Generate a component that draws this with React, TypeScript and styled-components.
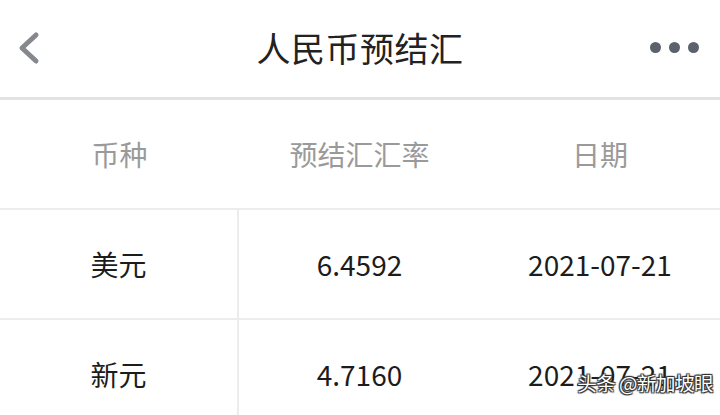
import React from "react";
import styled, { createGlobalStyle } from "styled-components";

const Global = createGlobalStyle`
  html, body { margin: 0; padding: 0; background: #fff; }
  body { font-family: "Noto Sans CJK SC", "Noto Sans", sans-serif; overflow: hidden; }
`;

const Page = styled.div`
  position: relative;
  width: 720px;
  height: 415px;
  overflow: hidden;
  background: #fff;
`;

const NavBar = styled.div`
  height: 97px;
  display: grid;
  grid-template-columns: 120px 1fr 120px;
  align-items: center;
  border-bottom: 3px solid #e3e3e3;
`;

const BackBtn = styled.div`
  display: flex;
  align-items: center;
  padding-left: 14px;
  height: 100%;
  padding-bottom: 2px;
`;

const Title = styled.div`
  text-align: center;
  font-size: 34px;
  color: #222;
  line-height: 1;
  padding-bottom: 2px;
  letter-spacing: 0.5px;
`;

const More = styled.div`
  display: flex;
  justify-content: flex-end;
  align-items: center;
  gap: 8px;
  padding-right: 21px;
  padding-bottom: 3px;
`;

const Dot = styled.span`
  width: 11px;
  height: 11px;
  border-radius: 50%;
  background: #5b626c;
`;

const Row = styled.div`
  height: 108px;
  display: grid;
  grid-template-columns: 239px 241px 240px;
  border-bottom: 2px solid #ececec;
`;

const Cell = styled.div<{ $head?: boolean; $line?: boolean }>`
  display: flex;
  align-items: center;
  justify-content: center;
  font-size: 28px;
  color: ${(p) => (p.$head ? "#9a9a9a" : "#1c1c1c")};
  border-right: ${(p) => (p.$line ? "2px solid #ececec" : "none")};
`;

const Watermark = styled.div`
  position: absolute;
  right: 7px;
  bottom: 18px;
  font-size: 19.5px;
  color: #fff;
  letter-spacing: -0.5px;
  text-shadow: 0 0 1px #222, 0 0 1px #222, 1px 1px 1px #333, -1px -1px 1px #333, 1px -1px 1px #333, -1px 1px 1px #333;
`;

const rows = [
  { cur: "美元", rate: "6.4592", date: "2021-07-21" },
  { cur: "新元", rate: "4.7160", date: "2021-07-21" },
];

export default function App() {
  return (
    <Page>
      <Global />
      <NavBar>
        <BackBtn>
          <svg width="30" height="34" viewBox="0 0 30 34">
            <path d="M22 4 L8 17 L22 30" fill="none" stroke="#85888c" strokeWidth="5" strokeLinecap="round" strokeLinejoin="round" />
          </svg>
        </BackBtn>
        <Title>人民币预结汇</Title>
        <More>
          <Dot />
          <Dot />
          <Dot />
        </More>
      </NavBar>
      <Row>
        <Cell $head>币种</Cell>
        <Cell $head>预结汇汇率</Cell>
        <Cell $head>日期</Cell>
      </Row>
      {rows.map((r) => (
        <Row key={r.cur}>
          <Cell $line>{r.cur}</Cell>
          <Cell>{r.rate}</Cell>
          <Cell>{r.date}</Cell>
        </Row>
      ))}
      <Watermark>头条 @新加坡眼</Watermark>
    </Page>
  );
}
